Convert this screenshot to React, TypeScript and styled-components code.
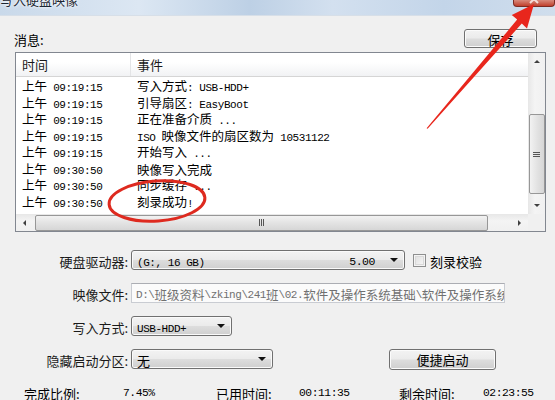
import React from "react";
import styled, { createGlobalStyle } from "styled-components";

interface LogEntry {
  time: string;
  event: string;
}

const entries: LogEntry[] = [
  { time: "上午 09:19:15", event: "写入方式: USB-HDD+" },
  { time: "上午 09:19:15", event: "引导扇区: EasyBoot" },
  { time: "上午 09:19:15", event: "正在准备介质 ..." },
  { time: "上午 09:19:15", event: "ISO 映像文件的扇区数为 10531122" },
  { time: "上午 09:19:15", event: "开始写入 ..." },
  { time: "上午 09:30:50", event: "映像写入完成" },
  { time: "上午 09:30:50", event: "同步缓存 ..." },
  { time: "上午 09:30:50", event: "刻录成功!" },
];

// ascii runs get the narrow fixed font, like the old bitmap font in the dialog
const mixed = (text: string) =>
  text
    .split(/([\x00-\x7f]+)/)
    .filter(Boolean)
    .map((part, i) =>
      /^[\x00-\x7f]+$/.test(part) ? (
        <Latin key={i}>{part}</Latin>
      ) : (
        <React.Fragment key={i}>{part}</React.Fragment>
      )
    );

const App: React.FC = () => {
  return (
    <Window>
      <GlobalStyle />
      <TitleBar>
        <Title>写入硬盘映像</Title>
        <CloseButton>
          <svg width="12" height="12" viewBox="0 0 12 12" style={{ marginTop: -7 }}>
            <path d="M2 2 L10 10 M10 2 L2 10" stroke="#f4dcd8" strokeWidth="2" />
          </svg>
        </CloseButton>
      </TitleBar>

      <Body>
        <TopRow>
          <Caption>消息:</Caption>
          <Button $width={73}>保存</Button>
        </TopRow>

        <ListBox>
          <ListContent>
            <Header>
              <HeaderCell>时间</HeaderCell>
              <HeaderCell $divider>事件</HeaderCell>
            </Header>
            <Rows>
              {entries.map((entry, index) => (
                <Row key={index}>
                  <Cell>{mixed(entry.time)}</Cell>
                  <Cell>{mixed(entry.event)}</Cell>
                </Row>
              ))}
            </Rows>
          </ListContent>

          <VScroll>
            <ArrowBox>
              <Tri $dir="up" />
            </ArrowBox>
            <VTrack>
              <VThumb>
                <Grip $vertical />
              </VThumb>
            </VTrack>
            <ArrowBox>
              <Tri $dir="down" />
            </ArrowBox>
          </VScroll>

          <HScroll>
            <ArrowBox>
              <Tri $dir="left" />
            </ArrowBox>
            <HTrack>
              <HThumb>
                <Grip />
              </HThumb>
            </HTrack>
            <ArrowBox>
              <Tri $dir="right" />
            </ArrowBox>
          </HScroll>
          <Corner />
        </ListBox>

        <Form>
          <Label>硬盘驱动器:</Label>
          <Line>
            <Combo $width={274}>
              <ComboText>{mixed("(G:, 16 GB)")}</ComboText>
              <ComboValue>5.00</ComboValue>
              <DropArrow />
            </Combo>
            <Check />
            <CheckLabel>刻录校验</CheckLabel>
          </Line>

          <Label>映像文件:</Label>
          <Line>
            <TextBox>
              {mixed("D:\\班级资料\\zking\\241班\\02.软件及操作系统基础\\软件及操作系统基础")}
            </TextBox>
          </Line>

          <Label>写入方式:</Label>
          <Line>
            <Combo $width={101}>
              <ComboText>{mixed("USB-HDD+")}</ComboText>
              <DropArrow />
            </Combo>
          </Line>

          <Label>隐藏启动分区:</Label>
          <Line>
            <Combo $width={142}>
              <ComboText>无</ComboText>
              <DropArrow />
            </Combo>
            <Button $width={107} $height={21} $offset={116}>
              便捷启动
            </Button>
          </Line>
        </Form>

        <Stats>
          <span>完成比例:</span>
          <Latin>7.45%</Latin>
          <span>已用时间:</span>
          <Latin>00:11:35</Latin>
          <span>剩余时间:</span>
          <Latin>02:23:55</Latin>
        </Stats>
      </Body>

      <Annotation width="555" height="400" viewBox="0 0 555 400">
        <ellipse
          cx="157"
          cy="201"
          rx="48"
          ry="20"
          fill="none"
          stroke="#de2a1f"
          strokeWidth="3"
          transform="rotate(-4 157 201)"
        />
        <polygon
          points="426.6,128.3 517.2,19.5 511.8,15 534,4 527,28.5 521.8,23.6 427.6,128.8"
          fill="#e8261c"
        />
      </Annotation>
    </Window>
  );
};

export default App;

const GlobalStyle = createGlobalStyle`
  html, body {
    margin: 0;
    padding: 0;
    background: #f0f0f0;
  }
  body {
    font-family: "Noto Sans CJK SC", "Liberation Sans", sans-serif;
    font-size: 13px;
    color: #000;
  }
`;

const Window = styled.div`
  position: relative;
  width: 555px;
  height: 400px;
  overflow: hidden;
  display: flex;
  flex-direction: column;
  background: #f0f0f0;
`;

const TitleBar = styled.div`
  height: 15px;
  flex-shrink: 0;
  display: flex;
  justify-content: space-between;
  align-items: flex-start;
  overflow: hidden;
  background: linear-gradient(
    90deg,
    #c9d9ea 0%,
    #dce7f3 25%,
    #bdd0e5 45%,
    #d3e0ef 60%,
    #c3d5e9 80%,
    #d0deed 100%
  );
  border-bottom: 1px solid #d7dfe8;
`;

const Title = styled.div`
  margin-top: -7px;
  font-size: 13px;
  line-height: 14px;
  color: #1c2633;
  text-shadow: 0 0 4px #fff, 0 0 2px #fff;
`;

const CloseButton = styled.div`
  width: 42px;
  height: 7px;
  box-sizing: border-box;
  display: flex;
  justify-content: center;
  overflow: hidden;
  background: linear-gradient(#d88a7c, #c0402d);
  border: 1px solid #7d2b22;
  border-top: none;
  border-radius: 0 0 4px 4px;
`;

const Body = styled.div`
  flex-shrink: 0;
  display: flex;
  flex-direction: column;
  padding: 13px 9px 0 15px;
`;

const TopRow = styled.div`
  display: flex;
  justify-content: space-between;
  align-items: center;
  height: 19px;
`;

const Caption = styled.span`
  margin: 3px 0 0 -1px;
  line-height: 14px;
`;

const Button = styled.div<{ $width: number; $height?: number; $offset?: number }>`
  width: ${(p) => p.$width}px;
  height: ${(p) => p.$height ?? 19}px;
  margin-left: ${(p) => p.$offset ?? 0}px;
  margin-right: ${(p) => (p.$offset ? 0 : 9)}px;
  box-sizing: border-box;
  display: flex;
  align-items: center;
  justify-content: center;
  padding-top: 2px;
  border: 1px solid #707070;
  border-radius: 3px;
  box-shadow: inset 0 0 0 1px #fbfbfb;
  background: linear-gradient(#f3f3f3 0%, #ebebeb 48%, #dddddd 52%, #cfcfcf 100%);
  font-size: 13px;
  line-height: 14px;
`;

const ListBox = styled.div`
  margin-top: 4px;
  height: 180px;
  box-sizing: border-box;
  border: 1px solid #828790;
  background: #fff;
  display: grid;
  grid-template-columns: 1fr 17px;
  grid-template-rows: 1fr 17px;
`;

const ListContent = styled.div`
  overflow: hidden;
`;

const Header = styled.div`
  height: 24px;
  box-sizing: border-box;
  display: grid;
  grid-template-columns: 114px 1fr;
  background: linear-gradient(#ffffff 0%, #ffffff 40%, #f1f2f4 100%);
  border-bottom: 1px solid #d5d5d5;
`;

const HeaderCell = styled.div<{ $divider?: boolean }>`
  display: flex;
  align-items: center;
  padding-left: 6px;
  border-left: ${(p) => (p.$divider ? "1px solid #e3e4e6" : "none")};
  font-size: 13px;
  color: #1a1a1a;
`;

const Rows = styled.div`
  padding-top: 1px;
`;

const Row = styled.div`
  height: 16.5px;
  display: grid;
  grid-template-columns: 115px 1fr;
  align-items: center;
`;

const Cell = styled.div`
  padding-left: 6px;
  font-size: 12.5px;
  line-height: 16px;
  white-space: nowrap;
`;

const Latin = styled.span`
  font-family: "Liberation Mono", "DejaVu Sans Mono", monospace;
  font-size: 11px;
  letter-spacing: -0.45px;
`;

const VScroll = styled.div`
  display: flex;
  flex-direction: column;
  background: linear-gradient(90deg, #e7e7e7, #f4f4f4 40%, #f0f0f0);
`;

const HScroll = styled.div`
  display: flex;
  background: linear-gradient(#e7e7e7, #f4f4f4 40%, #f0f0f0);
`;

const Corner = styled.div`
  background: #f0f0f0;
`;

const ArrowBox = styled.div`
  width: 17px;
  height: 17px;
  flex-shrink: 0;
  display: flex;
  align-items: center;
  justify-content: center;
`;

const Tri = styled.div<{ $dir: "up" | "down" | "left" | "right" }>`
  width: 0;
  height: 0;
  border: 3px solid transparent;
  ${(p) =>
    p.$dir === "up"
      ? "border-bottom: 3px solid #404040; border-top: none;"
      : p.$dir === "down"
      ? "border-top: 3px solid #404040; border-bottom: none;"
      : p.$dir === "left"
      ? "border-right: 3px solid #404040; border-left: none;"
      : "border-left: 3px solid #404040; border-right: none;"}
`;

const VTrack = styled.div`
  flex: 1;
  display: flex;
  flex-direction: column;
  align-items: center;
`;

const HTrack = styled.div`
  flex: 1;
  display: flex;
  align-items: center;
`;

const VThumb = styled.div`
  margin-top: 44px;
  width: 16px;
  height: 80px;
  box-sizing: border-box;
  display: flex;
  align-items: center;
  justify-content: center;
  border: 1px solid #979797;
  border-radius: 2px;
  background: linear-gradient(90deg, #f2f2f2, #e3e3e3 50%, #d6d6d6);
`;

const HThumb = styled.div`
  margin-left: 2px;
  width: 453px;
  height: 16px;
  box-sizing: border-box;
  display: flex;
  align-items: center;
  justify-content: center;
  border: 1px solid #979797;
  border-radius: 2px;
  background: linear-gradient(#f2f2f2, #e3e3e3 50%, #d6d6d6);
`;

const Grip = styled.div<{ $vertical?: boolean }>`
  width: ${(p) => (p.$vertical ? 7 : 5)}px;
  height: ${(p) => (p.$vertical ? 5 : 7)}px;
  background: ${(p) =>
    p.$vertical
      ? "repeating-linear-gradient(#555 0 1px, transparent 1px 2px)"
      : "repeating-linear-gradient(90deg, #555 0 1px, transparent 1px 2px)"};
`;

const Form = styled.div`
  margin-top: 18px;
  display: grid;
  grid-template-columns: 113px 1fr;
  grid-auto-rows: 20px;
  column-gap: 3px;
  row-gap: 13px;
  align-items: start;
`;

const Label = styled.div`
  padding-top: 2px;
  text-align: right;
  font-size: 13px;
  line-height: 20px;
  color: #1a1a1a;
`;

const Line = styled.div`
  display: flex;
  align-items: center;
  height: 20px;
`;

const Combo = styled.div<{ $width: number }>`
  width: ${(p) => p.$width}px;
  height: 20px;
  box-sizing: border-box;
  display: flex;
  align-items: center;
  padding: 3px 6px 0 5px;
  border: 1px solid #707070;
  border-radius: 3px;
  box-shadow: inset 0 0 0 1px #fafafa;
  background: linear-gradient(#f3f3f3 0%, #ebebeb 48%, #dddddd 52%, #cfcfcf 100%);
  font-size: 13px;
`;

const ComboText = styled.span`
  flex: 1;
  white-space: nowrap;
  line-height: 16px;
`;

const ComboValue = styled(Latin)`
  font-size: 11.5px;
  margin-right: 15px;
`;

const DropArrow = styled.div`
  width: 0;
  height: 0;
  margin-top: -3px;
  border-left: 4px solid transparent;
  border-right: 4px solid transparent;
  border-top: 4px solid #111;
`;

const Check = styled.div`
  margin-left: 8px;
  width: 13px;
  height: 13px;
  box-sizing: border-box;
  border: 1px solid #8e8f8f;
  box-shadow: inset 0 0 0 1px #f4f4f4, inset 0 0 0 2px #d9d9d9;
  background: linear-gradient(135deg, #dcdcdc, #fafafa);
`;

const CheckLabel = styled.span`
  margin: 3px 0 0 4px;
  font-size: 13px;
  line-height: 16px;
`;

const TextBox = styled.div`
  width: 374px;
  height: 20px;
  box-sizing: border-box;
  padding: 3px 0 0 4px;
  display: flex;
  align-items: center;
  overflow: hidden;
  white-space: nowrap;
  border: 1px solid #c9ccd2;
  border-top-color: #abadb3;
  background: #fbfbfb;
  color: #707070;
  font-size: 12.5px;
  line-height: 16px;
`;

const Stats = styled.div`
  margin-top: 17px;
  padding-left: 9px;
  display: grid;
  grid-template-columns: 99px 93px 83px 100px 84px 1fr;
  align-items: center;
  font-size: 13px;
  line-height: 15px;

  ${Latin} {
    font-size: 11.3px;
  }
`;

const Annotation = styled.svg`
  position: absolute;
  top: 0;
  left: 0;
  pointer-events: none;
`;
